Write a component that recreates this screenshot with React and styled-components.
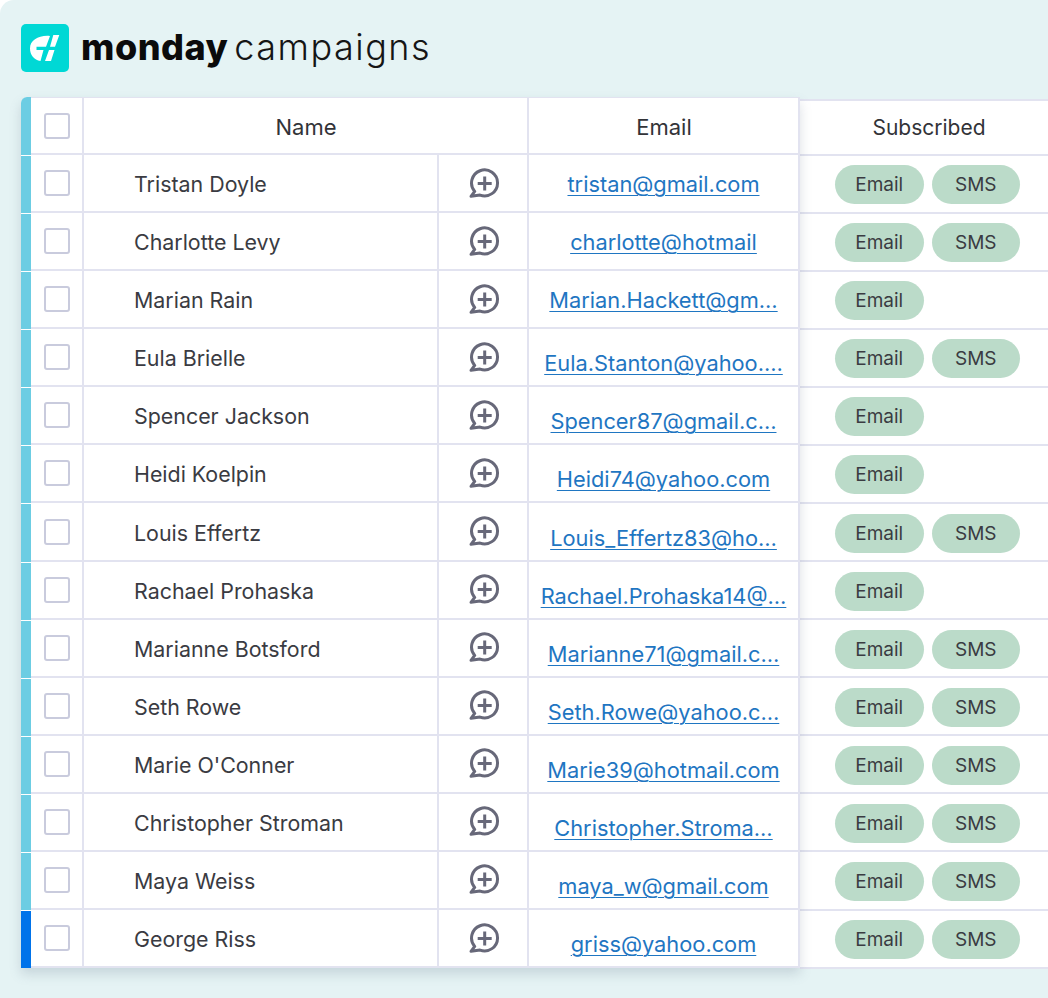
import React from "react";
import styled, { createGlobalStyle } from "styled-components";

const Global = createGlobalStyle`
  html, body { margin: 0; padding: 0; background: #fff; }
  body { font-family: "Inter", "Liberation Sans", sans-serif; }
`;

const ROW_H = 58.08;
const LINE = "#e2e3f0";

const Page = styled.div`
  width: 1048px;
  height: 998px;
  box-sizing: border-box;
  overflow: hidden;
  background: #e5f3f4;
  border-radius: 14px 0 0 0;
  padding: 24px 0 0 21px;
`;

const Brand = styled.div`
  display: flex;
  align-items: center;
  height: 48px;
  box-sizing: border-box;
  margin-bottom: 25px;
`;

const LogoMark = styled.svg`
  width: 48px;
  height: 48px;
  flex: none;
  margin-right: 12px;
`;

const BrandWords = styled.div`
  display: flex;
  align-items: baseline;
  margin-top: -3px;
`;

const BrandBold = styled.span`
  font-weight: 800;
  font-size: 36px;
  letter-spacing: 0.5px;
  color: #0b0b0b;
  margin-right: 6px;
`;

const BrandLight = styled.span`
  font-weight: 300;
  font-size: 36px;
  letter-spacing: 1.5px;
  color: #151515;
`;

const Board = styled.div`
  display: flex;
  align-items: flex-start;
`;

const Front = styled.div`
  width: 779px;
  flex: none;
  position: relative;
  z-index: 1;
  background: #fff;
  border-radius: 6px 0 0 0;
  overflow: hidden;
  box-shadow: 0 6px 12px rgba(90, 110, 130, 0.22);
`;

const Back = styled.div`
  flex: 1;
  margin-top: 2px;
  background: #fff;
`;

const FrontRow = styled.div`
  display: grid;
  grid-template-columns: 10px 51px 355px 90px 273px;
  height: ${(p) => p.$h}px;
  box-sizing: border-box;
`;

const Strip = styled.div`
  background: ${(p) => p.$color};
  border-top: ${(p) => (p.$first ? "0" : "1px solid #fff")};
`;

const Cell = styled.div`
  display: flex;
  align-items: center;
  box-sizing: border-box;
  min-width: 0;
  border-bottom: 2px solid ${LINE};
  border-left: 2px solid ${LINE};
  border-top: ${(p) => (p.$top ? `1px solid ${LINE}` : "0")};
`;

const CheckCell = styled(Cell)`
  justify-content: center;
  border-left: 0;
`;

const Check = styled.span`
  width: 26px;
  height: 26px;
  box-sizing: border-box;
  border: 2px solid #c9cbdd;
  border-radius: 3px;
  background: #fff;
  margin-left: 1px;
`;

const HeadCell = styled(Cell)`
  justify-content: center;
  padding: 3px 0 0 1px;
  font-size: 22px;
  color: #323338;
  grid-column: span ${(p) => p.$span || 1};
  border-right: ${(p) => (p.$end ? `2px solid ${LINE}` : "0")};
`;

const NameCell = styled(Cell)`
  padding: 2px 0 0 50px;
  font-size: 21.4px;
  color: #3a3b42;
  white-space: nowrap;
`;

const ChatCell = styled(Cell)`
  justify-content: center;
  padding: 1px 0 0 3px;
`;

const EmailCell = styled(Cell)`
  justify-content: center;
  padding-top: ${(p) => (p.$low ? 12 : 2)}px;
  border-right: 2px solid ${LINE};
`;

const EmailLink = styled.a`
  font-size: 21.8px;
  color: #1f76c2;
  text-decoration: underline;
  text-underline-offset: 3px;
  text-decoration-thickness: 1px;
  white-space: nowrap;
`;

const BackRow = styled.div`
  display: flex;
  align-items: center;
  height: ${(p) => p.$h}px;
  box-sizing: border-box;
  border-bottom: 2px solid ${LINE};
  gap: 8px;
  padding: 2px 0 0 35px;
`;

const BackHead = styled(BackRow)`
  justify-content: center;
  padding: 0 0 0 10px;
  border-top: 2px solid ${LINE};
  font-size: 21px;
  color: #323338;
`;

const Pill = styled.span`
  width: 88.5px;
  height: 39px;
  border-radius: 20px;
  background: #bbdbc9;
  display: flex;
  align-items: center;
  justify-content: center;
  font-size: 19px;
  color: #3a3b42;
`;

const Bubble = () => (
  <svg width="32" height="32" viewBox="0 0 32 32" fill="none" stroke="#676879" strokeWidth="3" strokeLinecap="round" strokeLinejoin="round">
    <path d="M5.7 23.4A13 13 0 1 1 11 27.1L2 28.3Z" />
    <path d="M15.7 8.5v14M8.7 15.5h14" strokeLinecap="butt" />
  </svg>
);

const Logo = () => (
  <LogoMark viewBox="0 0 48 48">
    <rect width="48" height="48" rx="5" fill="#00d8d5" />
    <path d="M29 12C18 11 9 16 9 24.5C9 31 13 36 19.5 37L22.5 26H15.5V22.7H25Z" fill="#fff" />
    <path d="M32.3 11H38.3L34 22.7H29ZM28 26H33.5L30 37H24Z" fill="#fff" />
  </LogoMark>
);

const BLUE = "#6ccde3";
const people = [
  ["Tristan Doyle", "tristan@gmail.com", true, false],
  ["Charlotte Levy", "charlotte@hotmail", true, false],
  ["Marian Rain", "Marian.Hackett@gm…", false, false],
  ["Eula Brielle", "Eula.Stanton@yahoo.…", true, true],
  ["Spencer Jackson", "Spencer87@gmail.c…", false, true],
  ["Heidi Koelpin", "Heidi74@yahoo.com", false, true],
  ["Louis Effertz", "Louis_Effertz83@ho…", true, true],
  ["Rachael Prohaska", "Rachael.Prohaska14@…", false, true],
  ["Marianne Botsford", "Marianne71@gmail.c…", true, true],
  ["Seth Rowe", "Seth.Rowe@yahoo.c…", true, true],
  ["Marie O'Conner", "Marie39@hotmail.com", true, true],
  ["Christopher Stroman", "Christopher.Stroma…", true, true],
  ["Maya Weiss", "maya_w@gmail.com", true, true],
  ["George Riss", "griss@yahoo.com", true, true],
];

export default function App() {
  return (
    <Page>
      <Global />
      <Brand>
        <Logo />
        <BrandWords>
          <BrandBold>monday</BrandBold>
          <BrandLight>campaigns</BrandLight>
        </BrandWords>
      </Brand>
      <Board>
        <Front>
          <FrontRow $h={58}>
            <Strip $color={BLUE} $first />
            <CheckCell $top><Check /></CheckCell>
            <HeadCell $top $span={2}>Name</HeadCell>
            <HeadCell $top $end>Email</HeadCell>
          </FrontRow>
          {people.map(([name, email, , low], i) => (
            <FrontRow key={name} $h={ROW_H}>
              <Strip $color={i === people.length - 1 ? "#0073ea" : BLUE} />
              <CheckCell><Check /></CheckCell>
              <NameCell>{name}</NameCell>
              <ChatCell><Bubble /></ChatCell>
              <EmailCell $low={low}>
                <EmailLink href="#">{email}</EmailLink>
              </EmailCell>
            </FrontRow>
          ))}
        </Front>
        <Back>
          <BackHead $h={56.5}>Subscribed</BackHead>
          {people.map(([name, , sms]) => (
            <BackRow key={name} $h={ROW_H}>
              <Pill>Email</Pill>
              {sms && <Pill>SMS</Pill>}
            </BackRow>
          ))}
        </Back>
      </Board>
    </Page>
  );
}
